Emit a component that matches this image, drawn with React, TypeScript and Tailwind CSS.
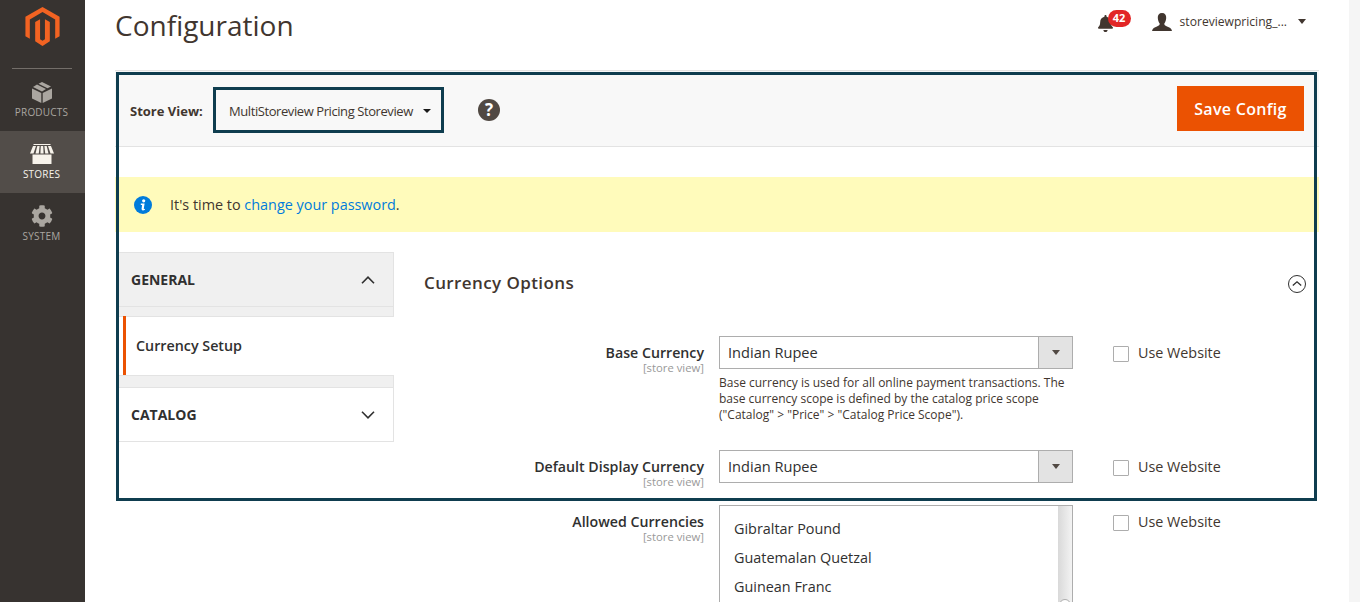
import { FaBell, FaCog } from 'react-icons/fa';

const font = { fontFamily: '"Open Sans", "Noto Sans", sans-serif' };

function Logo() {
  return (
    <svg width="35" height="40" viewBox="0 0 35 40" fill="#f26322">
      <path d="M17.5 0 35 10V30L30.5 32.6V12.7L17.5 5.2 4.5 12.7V32.6L0 30V10Z" />
      <path d="M10 15.5 15 12.6V33L17.5 34.5 20 33V12.6L25 15.5V35L17.5 40 10 35Z" />
    </svg>
  );
}

function BoxIcon() {
  return (
    <svg width="20" height="21" viewBox="0 0 20 21" fill="#aaa6a0">
      <path d="M0 6.5 9.3 11V21L0 16.5Z" />
      <path d="M20 6.5 10.7 11V21L20 16.5Z" />
      <path d="M10 0 19 4.6 15.5 6.3 6.5 1.7Z" />
      <path d="M5 2.5 14 7.1 10 9.6 1 5Z" />
    </svg>
  );
}

function StoreIcon() {
  return (
    <svg width="24" height="20" viewBox="0 0 24 20" fill="#f7f3eb">
      <path d="M2.5 10.5H21.5V20H2.5Z" />
      <path d="M3.5 0H20.5V1H3.5Z" />
      <path d="M3 2H6L3.5 9.5H0Z" />
      <path d="M7.3 2H9.6L8.8 9.5H5.5Z" />
      <path d="M10.8 2H13.2L13.6 9.5H10.4Z" />
      <path d="M14.4 2H16.7L18.5 9.5H15.2Z" />
      <path d="M18 2H21L24 9.5H20.5Z" />
    </svg>
  );
}

function UserIcon() {
  return (
    <svg width="20" height="18" viewBox="0 0 20 18" fill="#41362f">
      <path d="M10 0C13 0 14.4 2 14.2 5 14 8 13 9.5 12.3 10.5 12.2 12 13 12.6 15 13.4 17.5 14.3 19.5 15 20 18H0C.5 15 2.5 14.3 5 13.4 7 12.6 7.8 12 7.7 10.5 7 9.5 6 8 5.8 5 5.6 2 7 0 10 0Z" />
    </svg>
  );
}

function Chevron({ up }: { up?: boolean }) {
  return (
    <svg width="14" height="8" viewBox="0 0 14 8" fill="none" stroke="#303030" strokeWidth="1.6">
      <path d={up ? 'M1 7.2 7 1.2 13 7.2' : 'M1 .8 7 6.8 13 .8'} />
    </svg>
  );
}

function NavItem({ label, active, icon }: { label: string; active?: boolean; icon: React.ReactNode }) {
  return (
    <div className={`flex h-[62px] flex-col items-center pr-[2px] pt-[12px] ${active ? 'bg-[#524d49] text-[#f7f3eb]' : 'text-[#aaa6a0]'}`}>
      <div className="flex h-[22px] items-center">{icon}</div>
      <span className="mt-[2px] text-[10px] leading-[14px] tracking-[0.2px]">{label}</span>
    </div>
  );
}

function ScopeLabel({ title }: { title: string }) {
  return (
    <div className="w-[280px] text-right">
      <div className="text-[14.2px] font-semibold leading-[19px] text-[#303030]">{title}</div>
      <div className="text-[11.3px] leading-[11px] text-[#999999]">[store view]</div>
    </div>
  );
}

function UseWebsite() {
  return (
    <div className="ml-[40px] flex h-[33px] items-center">
      <span className="mt-[2px] h-[16px] w-[16px] rounded-[1px] border border-[#adadad] bg-white" />
      <span className="ml-[9px] text-[14.35px] text-[#41362f]">Use Website</span>
    </div>
  );
}

function CurrencySelect() {
  return (
    <div className="flex h-[33px] w-[354px] items-center border border-[#adadad] bg-white">
      <span className="flex-1 pl-[8px] text-[14.6px] text-[#303030]">Indian Rupee</span>
      <span className="flex h-full w-[34px] items-center justify-center border-l border-[#adadad] bg-[#e3e3e3]">
        <span className="h-0 w-0 border-x-[4px] border-t-[5px] border-x-transparent border-t-[#514943]" />
      </span>
    </div>
  );
}

export default function App() {
  return (
    <div className="flex h-[602px] overflow-hidden bg-white text-[#303030]" style={font}>
      <aside className="w-[85px] shrink-0 bg-[#373330]">
        <div className="flex h-[69px] flex-col items-center pr-[1px] pt-[7px]">
          <Logo />
          <div className="mt-[22px] h-px w-[60px] bg-[#736e69]" />
        </div>
        <NavItem label="PRODUCTS" icon={<BoxIcon />} />
        <NavItem label="STORES" active icon={<StoreIcon />} />
        <NavItem label="SYSTEM" icon={<FaCog size={22} color="#aaa6a0" />} />
      </aside>

      <main className="relative flex-1 px-[30px]">
        <header className="flex h-[70px] items-start">
          <h1 className="mt-[5px] text-[28px] font-normal leading-[40px] text-[#41362f]">Configuration</h1>
          <div className="ml-auto mr-[13px] mt-[9px] flex items-center">
            <div className="relative mr-[21px] h-[24px] w-[34px]">
              <FaBell size={17} color="#41362f" className="absolute left-0 top-[5px]" />
              <span className="absolute left-[11px] top-0 flex h-[17px] w-[23px] items-center justify-center rounded-full bg-[#e22626] text-[11px] font-bold text-white">42</span>
            </div>
            <UserIcon />
            <span className="ml-[8px] pt-[1px] text-[12.1px] leading-[24px] text-[#41362f]">storeviewpricing_...</span>
            <span className="ml-[11px] h-0 w-0 border-x-[4.5px] border-t-[5px] border-x-transparent border-t-[#41362f]" />
          </div>
        </header>

        <div className="flex h-[77px] items-center border-y border-[#e3e3e3] bg-[#f8f8f8] pl-[15px] pr-[15px] pt-[3px]">
          <span className="w-[83px] pt-[4px] text-[13px] font-bold text-[#41362f]">Store View:</span>
          <div className="flex h-[46px] w-[231px] items-center border-[3px] border-[#0f3d4f] pl-[13px]">
            <span className="pt-[3px] text-[13px] tracking-[-0.42px] text-[#41362f]">MultiStoreview Pricing Storeview</span>
            <span className="ml-[10px] mt-[2px] h-0 w-0 border-x-[4px] border-t-[4px] border-x-transparent border-t-[#1a1a1a]" />
          </div>
          <span className="-mt-[1px] ml-[34px] flex h-[22px] w-[22px] items-center justify-center rounded-full bg-[#514943] text-[17px] font-bold text-white">?</span>
          <button className="-mt-[3px] ml-auto h-[45px] w-[127px] bg-[#eb5202] text-[16px] font-semibold tracking-[0.3px] text-white">Save Config</button>
        </div>

        <div className="mt-[30px] flex h-[55px] items-center bg-[#fffbbb] pl-[19px]">
          <svg width="18" height="18" viewBox="0 0 18 18">
            <circle cx="9" cy="9" r="9" fill="#007bdb" />
            <circle cx="9.7" cy="4.8" r="1.6" fill="#fff" />
            <path d="M6.8 7.6H10.6L9.8 12.4C9.7 13 10 13.1 11 12.7L10.9 13.8C9 14.8 7.3 14.6 7.6 12.6L8.1 9H6.8Z" fill="#fff" />
          </svg>
          <span className="ml-[18px] text-[14.4px] text-[#41362f]">
            It's time to <span className="text-[#007bdb]">change your password</span>.
          </span>
        </div>

        <div className="mt-[20px] flex">
          <nav className="ml-[4px] w-[275px] shrink-0 self-start text-[#303030]">
            <div className="flex h-[55px] items-center justify-between border-y border-r border-[#e3e3e3] bg-[#f0f0f0] pl-[12px] pr-[18px]">
              <span className="text-[14px] font-bold">GENERAL</span>
              <Chevron up />
            </div>
            <div className="h-[10px] border-b border-r border-[#e3e3e3] bg-[#f0f0f0]" />
            <div className="ml-[4px] -mt-[1px] flex h-[59px] items-center border-l-[3px] border-[#eb5202] pl-[10px]">
              <span className="text-[14.3px] font-semibold">Currency Setup</span>
            </div>
            <div className="h-[13px] border-y border-r border-[#e3e3e3] bg-[#f0f0f0]" />
            <div className="flex h-[54px] items-center justify-between border-b border-r border-[#e3e3e3] pl-[12px] pr-[18px]">
              <span className="text-[14px] font-bold">CATALOG</span>
              <Chevron />
            </div>
          </nav>

          <section className="ml-[30px] min-w-0 flex-1">
            <div className="flex h-[62px] items-center justify-between pr-[13px]">
              <h2 className="text-[17px] font-semibold tracking-[0.4px] text-[#41362f]">Currency Options</h2>
              <svg className="mt-[2px]" width="18" height="18" viewBox="0 0 18 18" fill="none" stroke="#303030" strokeWidth="1">
                <circle cx="9" cy="9" r="8.5" />
                <path d="M4.8 10.6 9 6.8 13.2 10.6" strokeWidth="1.3" />
              </svg>
            </div>

            <div className="mt-[22px] flex">
              <div className="pt-[7px]"><ScopeLabel title="Base Currency" /></div>
              <div className="ml-[15px] w-[354px]">
                <CurrencySelect />
                <p className="mt-[6px] text-[12px] leading-[16px] text-[#41362f]">
                  Base currency is used for all online payment transactions. The base currency scope is defined by the catalog price scope ("Catalog" &gt; "Price" &gt; "Catalog Price Scope").
                </p>
              </div>
              <UseWebsite />
            </div>

            <div className="mt-[27px] flex">
              <div className="pt-[7px]"><ScopeLabel title="Default Display Currency" /></div>
              <div className="ml-[15px]"><CurrencySelect /></div>
              <UseWebsite />
            </div>

            <div className="mt-[18px] flex">
              <div className="pt-[7px]"><ScopeLabel title="Allowed Currencies" /></div>
              <div className="relative ml-[15px] h-[110px] w-[354px] border border-[#adadad] pl-[14px] pt-[8px] text-[14.4px] text-[#303030]">
                <div className="flex h-[29px] items-center">Gibraltar Pound</div>
                <div className="flex h-[29px] items-center">Guatemalan Quetzal</div>
                <div className="flex h-[29px] items-center">Guinean Franc</div>
                <div className="absolute inset-y-0 right-0 w-[14px] bg-gradient-to-r from-[#d9d9d9] to-[#f3f3f3]">
                  <span className="absolute left-[1px] top-[93px] h-[12px] w-[12px] rounded-full border border-[#adadad] bg-white" />
                </div>
              </div>
              <UseWebsite />
            </div>
          </section>
        </div>

        {/* annotation frame drawn over the page */}
        <div className="pointer-events-none absolute left-[31px] top-[72px] h-[429px] w-[1201px] border-[3px] border-[#0f3d4f]" />
      </main>

      <div className="w-[11px] shrink-0 bg-[#f5f5f5]" />
    </div>
  );
}
